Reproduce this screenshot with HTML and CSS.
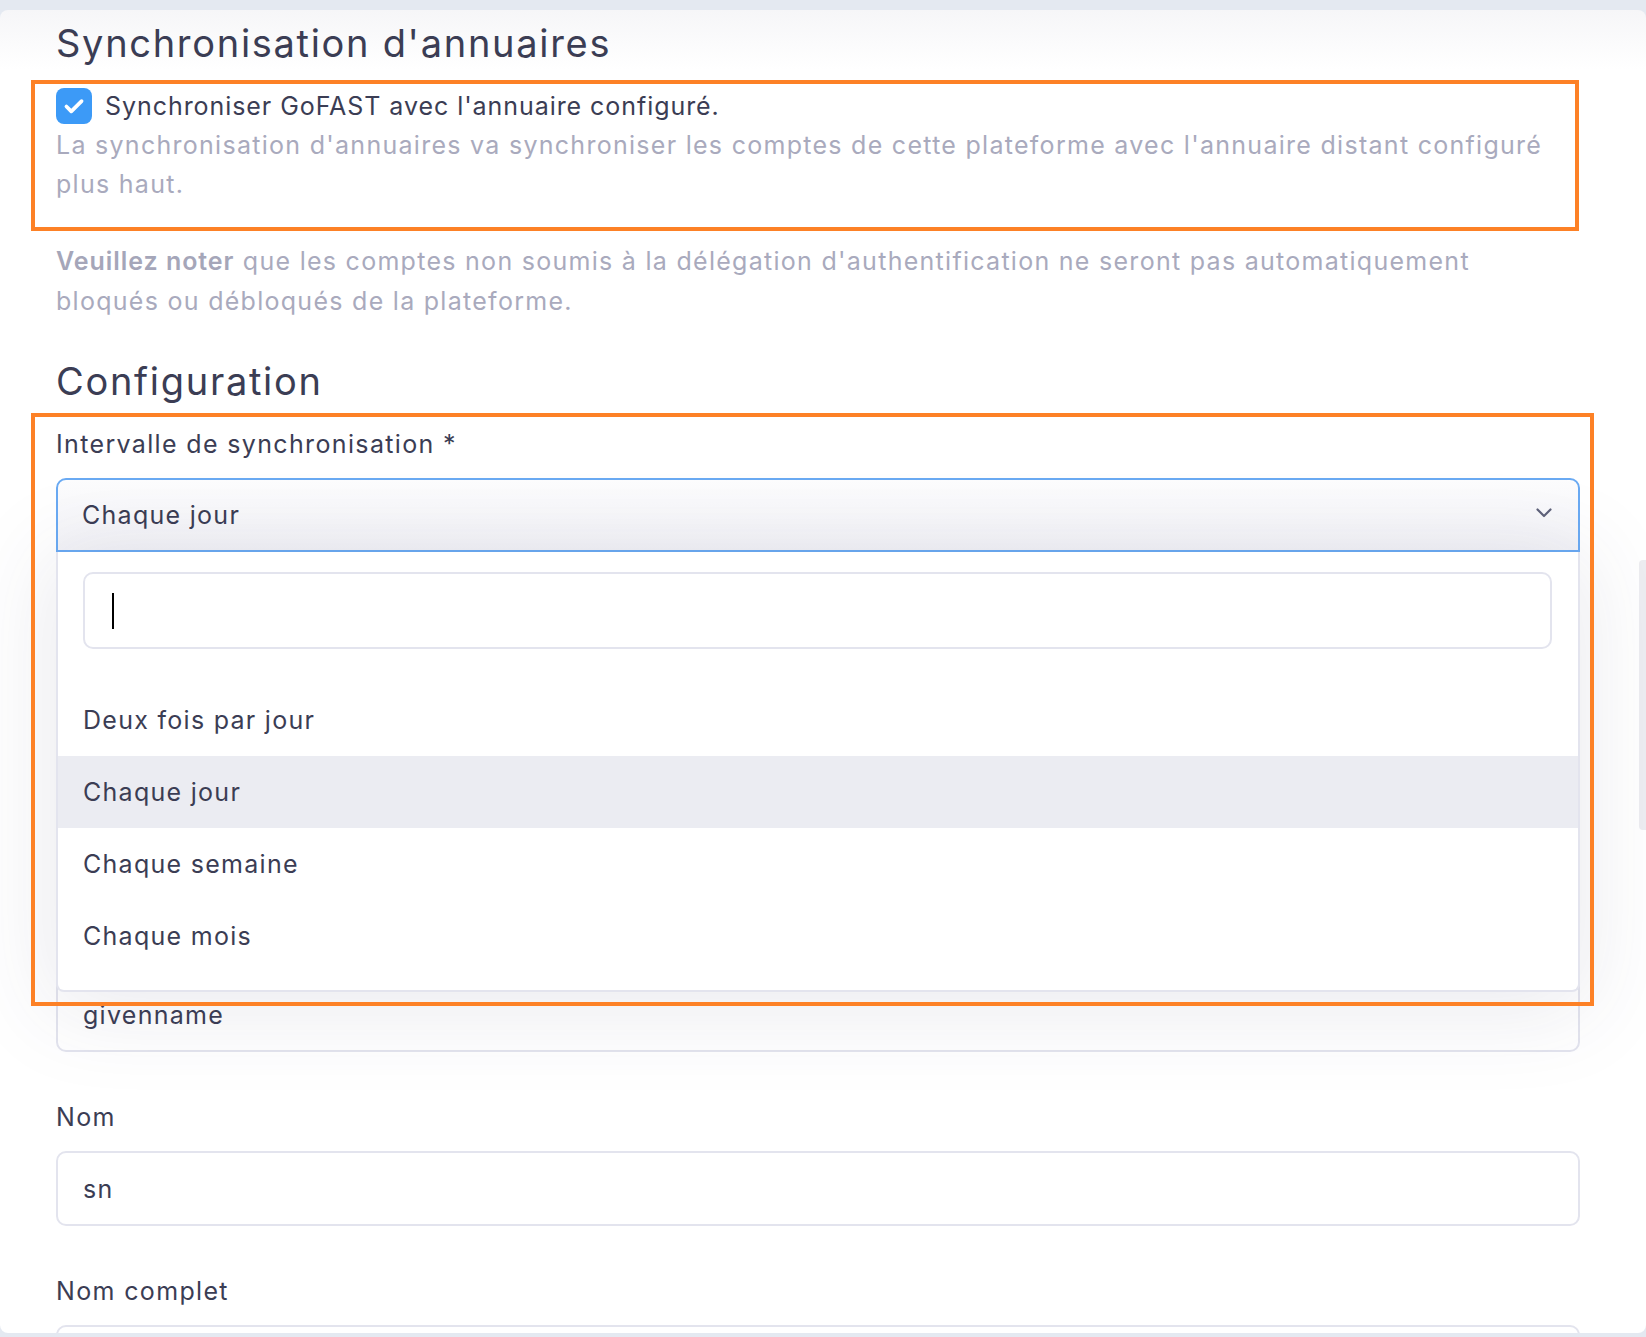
FILE: index.html
```html
<!DOCTYPE html>
<html lang="fr">
<head>
<meta charset="utf-8">
<title>Synchronisation d'annuaires</title>
<link rel="stylesheet" href="styles.css">
</head>
<body>
<div class="page">
  <div class="card">
    <h2 class="section-title">Synchronisation d'annuaires</h2>

    <div class="hl-box">
      <label class="check-row">
        <span class="checkbox">
          <svg viewBox="0 0 24 24" width="26" height="26"><path d="M5 12.5l4.5 4.5L19 7.5" fill="none" stroke="#fff" stroke-width="3.4" stroke-linecap="round" stroke-linejoin="round"/></svg>
        </span>
        <span class="check-label">Synchroniser GoFAST avec l'annuaire configuré.</span>
      </label>
      <p class="help">La synchronisation d'annuaires va synchroniser les comptes de cette plateforme avec l'annuaire distant configuré plus haut.</p>
    </div>

    <p class="note"><strong>Veuillez noter</strong> que les comptes non soumis à la délégation d'authentification ne seront pas automatiquement bloqués ou débloqués de la plateforme.</p>

    <h2 class="section-title config">Configuration</h2>

    <div class="field field-interval">
      <div class="hl-frame"></div>
      <div class="field-label">Intervalle de synchronisation *</div>
      <div class="select-wrap">
        <div class="select">
          <span>Chaque jour</span>
          <svg class="chevron" viewBox="0 0 16 10" width="16" height="10"><path d="M1.5 1.5L8 8l6.5-6.5" fill="none" stroke="#5f627a" stroke-width="2.2" stroke-linecap="round" stroke-linejoin="round"/></svg>
        </div>
        <div class="dropdown">
          <div class="search"><span class="caret"></span></div>
          <ul class="options">
            <li class="option">Deux fois par jour</li>
            <li class="option active">Chaque jour</li>
            <li class="option">Chaque semaine</li>
            <li class="option">Chaque mois</li>
          </ul>
        </div>
      </div>
    </div>

    <div class="field">
      <div class="field-label covered">Prénom</div>
      <div class="input">givenname</div>
    </div>
    <div class="field">
      <div class="field-label">Nom</div>
      <div class="input">sn</div>
    </div>
    <div class="field">
      <div class="field-label">Nom complet</div>
      <div class="input"></div>
    </div>

    <div class="scroll-thumb"></div>
  </div>
</div>
</body>
</html>
```

FILE: styles.css
```css
* { box-sizing: border-box; }

html, body {
  margin: 0;
  padding: 0;
}

body {
  background: #e4e9f1;
  font-family: "Inter", "Open Sans", "Liberation Sans", sans-serif;
  letter-spacing: 1.28px;
  color: #3b3d54;
  height: 1337px;
  overflow: hidden;
}

.page {
  padding-top: 10px;
  height: 1337px;
}

.card {
  position: relative;
  height: 1323px;
  overflow: hidden;
  border-radius: 8px;
  background: linear-gradient(#f6f6f8 0px, #ffffff 60px);
  padding: 11px 66px 0 56px;
}

.section-title {
  margin: 0;
  font-size: 38px;
  line-height: 44px;
  font-weight: 400;
  letter-spacing: 1.7px;
  color: #3b3d54;
}

.hl-box {
  margin: 15px 1px 0 -25px;
  border: 4px solid #fd8126;
  padding: 4px 4px 23px 21px;
}

.check-row {
  display: flex;
  align-items: center;
  gap: 13px;
  height: 36px;
}

.checkbox {
  width: 36px;
  height: 36px;
  border-radius: 8px;
  background: #3c9af7;
  display: flex;
  align-items: center;
  justify-content: center;
  flex: none;
}

.check-label {
  font-size: 25px;
  letter-spacing: 0.94px;
  color: #3b3d54;
}

.help {
  margin: 2px 0 0 0;
  font-size: 25px;
  line-height: 39px;
  color: #a9aabd;
}

.note {
  margin: 10px 0 0 0;
  font-size: 25px;
  line-height: 40px;
  color: #a9aabd;
}

.note strong {
  font-weight: 600;
  letter-spacing: 0.96px;
  color: #a5a6b9;
}

.section-title.config {
  margin-top: 38px;
}

.field {
  margin-top: 47px;
}

.field-interval {
  position: relative;
  margin-top: 23px;
  margin-bottom: 373px;
}

.hl-frame {
  position: absolute;
  top: -13px;
  left: -25px;
  width: 1563px;
  height: 593px;
  border: 4px solid #fd8126;
  z-index: 3;
  pointer-events: none;
}

.field-label {
  font-size: 25px;
  line-height: 36px;
  margin-bottom: 16px;
  letter-spacing: 1.35px;
  color: #3b3d54;
}

.field-label.covered {
  visibility: hidden;
}

.select-wrap {
  position: relative;
}

.select {
  height: 74px;
  border: 2px solid #6aaaf3;
  border-radius: 10px 10px 0 0;
  background: linear-gradient(#fdfdfe, #f3f3f7);
  display: flex;
  align-items: center;
  justify-content: space-between;
  padding: 0 26px 0 24px;
  font-size: 25px;
  color: #3b3d54;
}

.chevron {
  margin-top: -4px;
}

.dropdown {
  position: absolute;
  top: 100%;
  left: 0;
  right: 0;
  height: 440px;
  background: #ffffff;
  border: 2px solid #e3e4ee;
  border-top: none;
  border-radius: 0 0 8px 8px;
  padding: 20px 0 0 0;
  z-index: 2;
  box-shadow: 0 10px 90px 10px rgba(60, 60, 100, 0.10);
}

.search {
  margin: 0 26px 0 25px;
  height: 77px;
  border: 2px solid #e3e4ee;
  border-radius: 10px;
  display: flex;
  align-items: center;
  padding-left: 27px;
}

.caret {
  display: block;
  width: 2px;
  height: 36px;
  background: #000;
}

.options {
  list-style: none;
  margin: 35px 0 0 0;
  padding: 0;
}

.option {
  height: 72px;
  line-height: 72px;
  padding-left: 25px;
  font-size: 25px;
  color: #3b3d54;
}

.option.active {
  background: #ebecf2;
}

.input {
  height: 75px;
  border: 2px solid #e3e4ee;
  border-radius: 10px;
  display: flex;
  align-items: center;
  padding-left: 25px;
  font-size: 25px;
  color: #3b3d54;
  background: #fff;
}

.scroll-thumb {
  position: absolute;
  right: 0;
  top: 550px;
  width: 7px;
  height: 270px;
  border-radius: 4px 0 0 4px;
  background: #ededf1;
}
```
